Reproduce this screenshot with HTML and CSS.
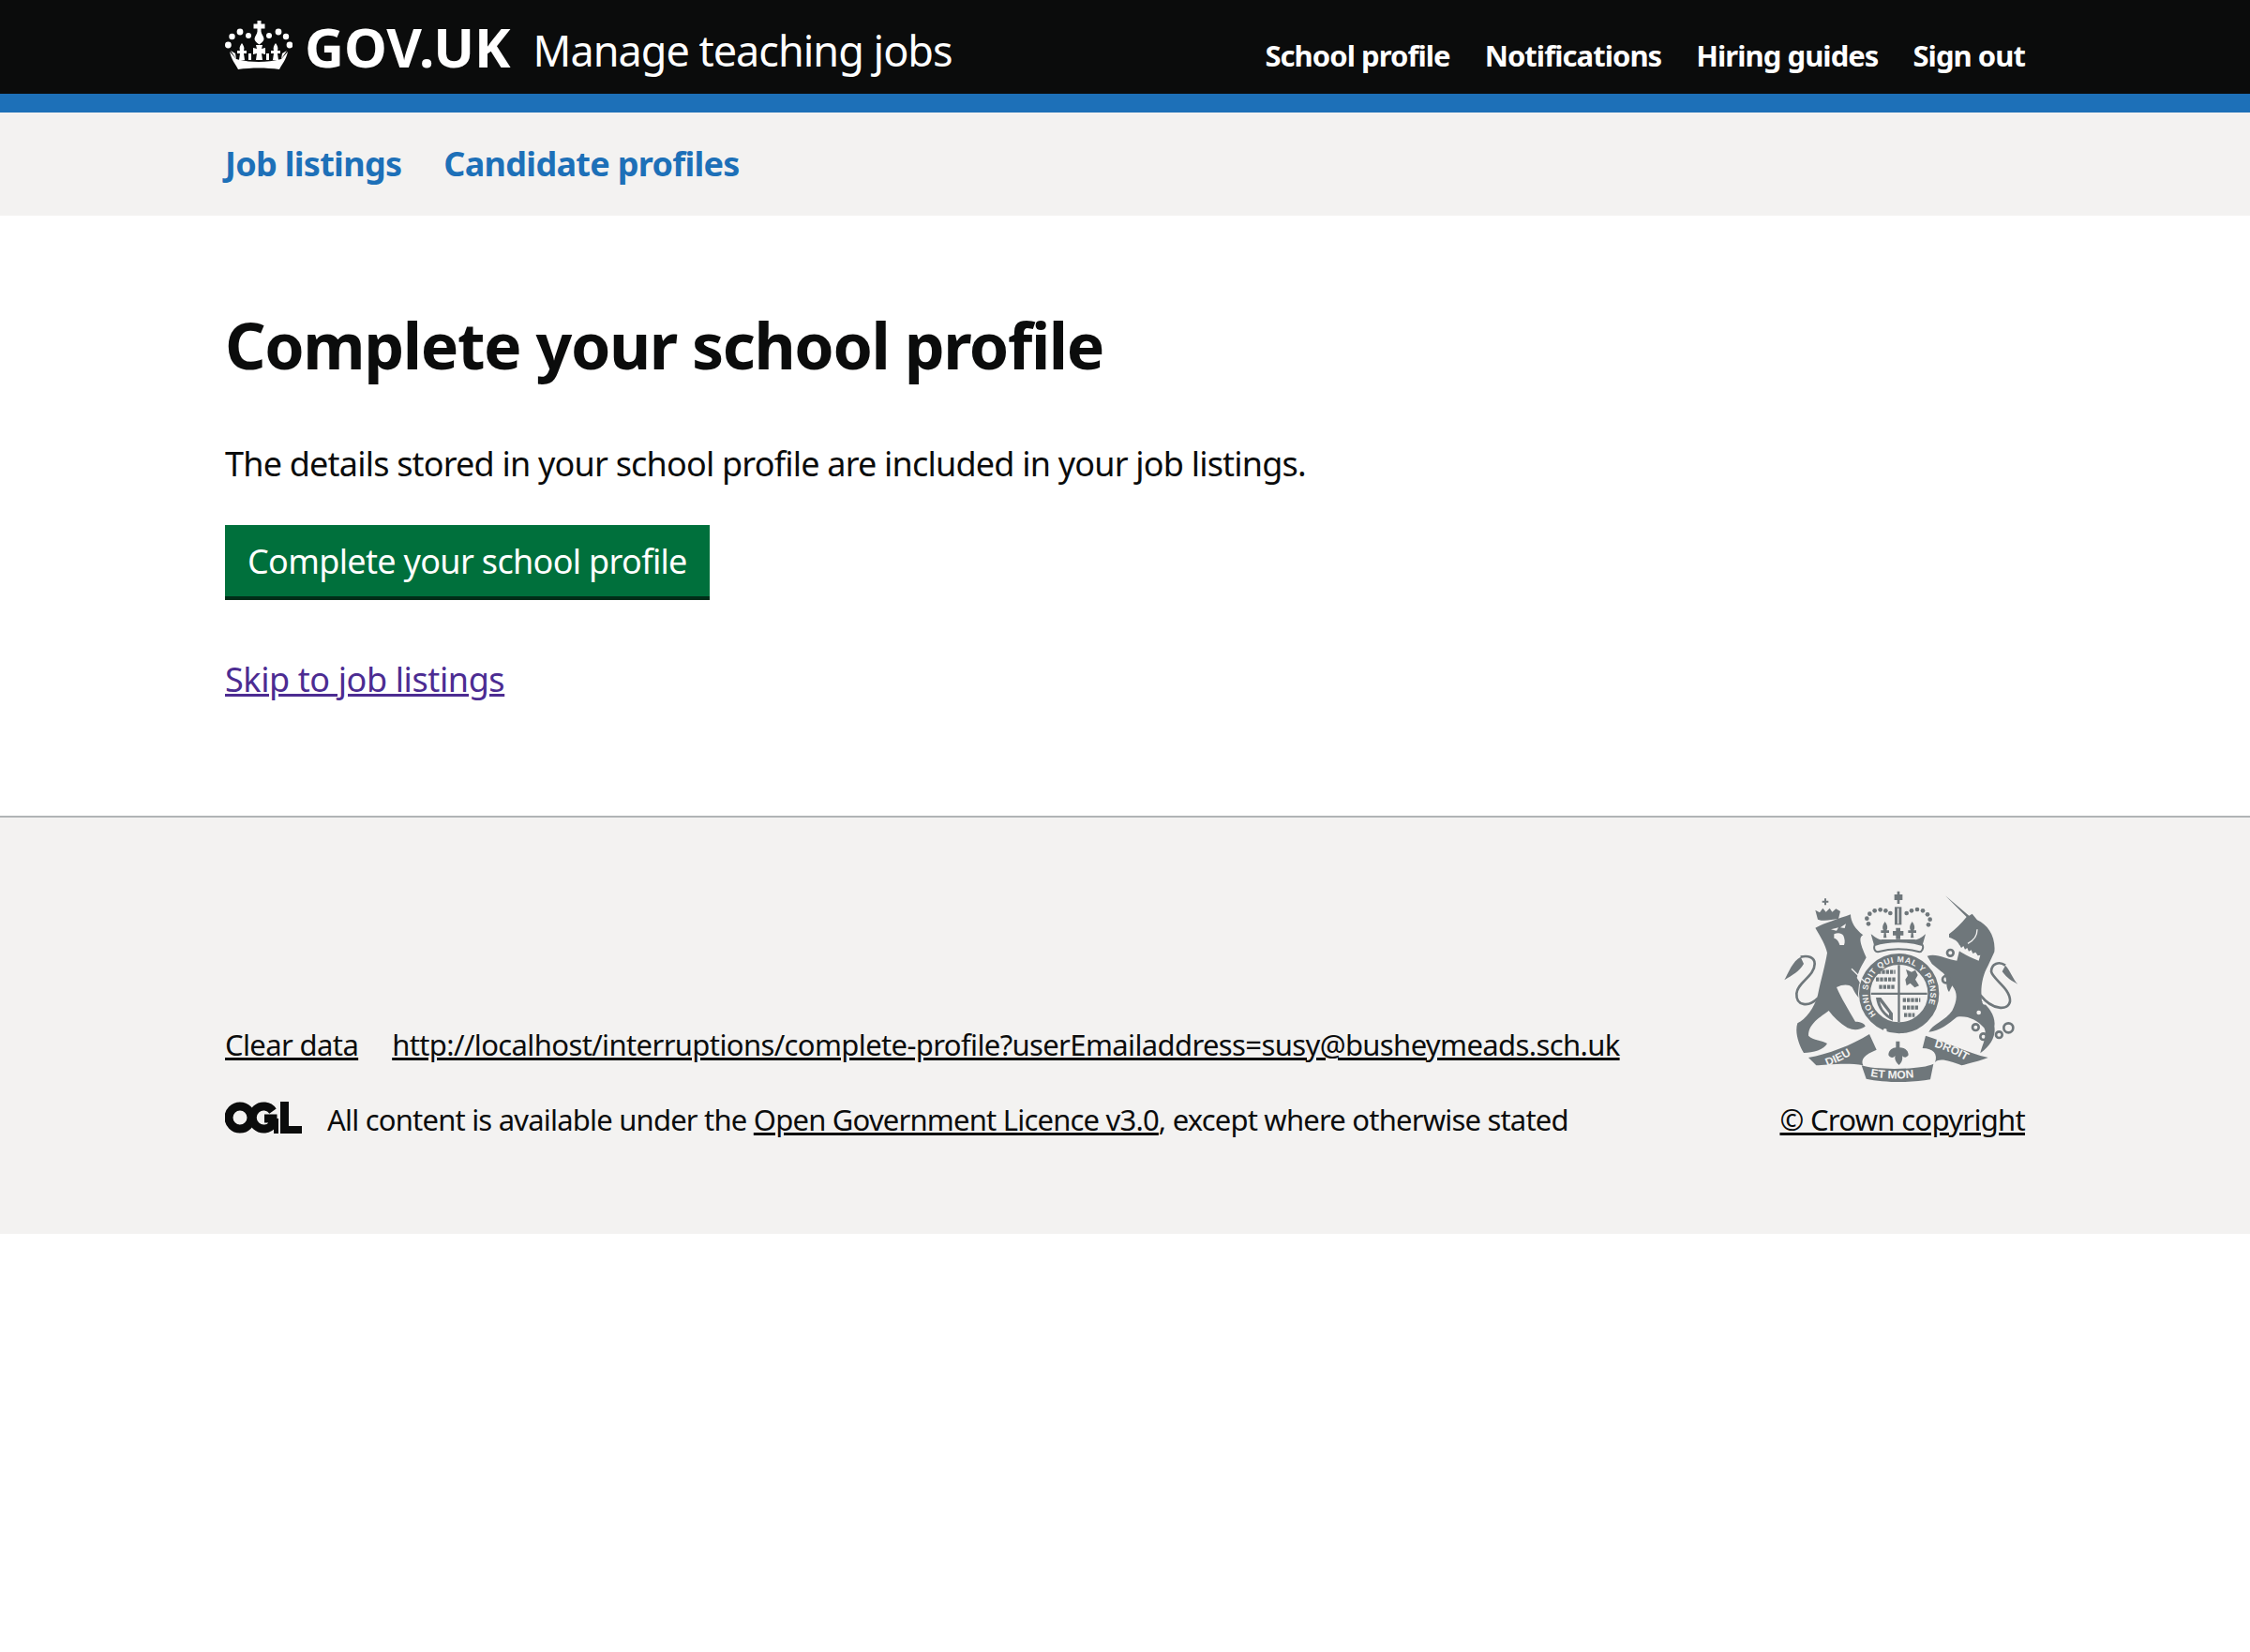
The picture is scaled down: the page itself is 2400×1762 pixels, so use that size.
FILE: index.html
```html
<!DOCTYPE html>
<html lang="en">
<head>
    <meta charset="UTF-8">
    <title>Complete your school profile - Manage teaching jobs</title>
    <link rel="stylesheet" href="styles.css">
</head>
<body>
    <header class="header">
        <div class="container header-row">
            <a class="logo" href="#">
                <svg class="crown" viewBox="0 0 72 52" aria-hidden="true">
                    <g fill="#fff">
                        <path d="M34.5 0h4v3.5h4v5h-4v3c0 3 3 5 3 8 0 2-2 4-5 6-3-2-5-4-5-6 0-3 3-5 3-8v-3h-4v-5h4z"/>
                        <circle cx="16" cy="12" r="3.4"/><circle cx="25" cy="16" r="3"/>
                        <circle cx="47" cy="16" r="3"/><circle cx="57" cy="12" r="3.4"/>
                        <circle cx="7.5" cy="17" r="3.2"/><circle cx="65" cy="17" r="3.2"/>
                        <circle cx="3.4" cy="26" r="3.4"/><circle cx="69" cy="26" r="3.4"/>
                        <path d="M12 41C28 45 44 45 60 41L67 33C65 42 61 46 58 52C44 50 28 50 14 52C11 46 7 42 5 33Z"/>
                        <path d="M18 24c2 3 3 5 2 8h3v3h-3l1 7h-6l1-7h-3v-3h3c-1-3 0-5 2-8z"/>
                        <path d="M54 24c2 3 3 5 2 8h3v3h-3l1 7h-6l1-7h-3v-3h3c-1-3 0-5 2-8z"/>
                        <path d="M33 26h7l-1 4 4-1v7l-4-1 1 7h-7l1-7-4 1v-7l4 1z"/>
                        <path d="M6 32l5 3 1 6zM66 32l-5 3-1 6zM25 35h3v7h-3zM44 35h3v7h-3z"/>
                    </g>
                </svg>
                <span class="logo-text">GOV.UK</span>
            </a>
            <a class="service-name" href="#">Manage teaching jobs</a>
            <nav class="header-nav">
                <a href="#">School profile</a>
                <a href="#">Notifications</a>
                <a href="#">Hiring guides</a>
                <a href="#">Sign out</a>
            </nav>
        </div>
    </header>
    <div class="header-stripe"></div>

    <nav class="sub-nav">
        <div class="container sub-nav-row">
            <a href="#">Job listings</a>
            <a href="#">Candidate profiles</a>
        </div>
    </nav>

    <main class="container main">
        <h1 class="heading">Complete your school profile</h1>
        <p class="body-text">The details stored in your school profile are included in your job listings.</p>
        <a class="button" href="#">Complete your school profile</a>
        <p class="skip"><a href="#">Skip to job listings</a></p>
    </main>

    <footer class="footer">
        <div class="container footer-row">
            <div class="footer-meta">
                <div class="footer-links">
                    <a href="#">Clear data</a>
                    <a href="#">http://localhost/interruptions/complete-profile?userEmailaddress=susy@busheymeads.sch.uk</a>
                </div>
                <div class="licence">
                    <svg class="ogl" viewBox="0 0 82 36" aria-hidden="true">
                        <g fill="none" stroke="#0b0c0c" stroke-width="9">
                            <circle cx="16" cy="18" r="12"/>
                            <path d="M51 11a12 12 0 1 0 0 14v-6h-9"/>
                        </g>
                        <path d="M59 1h9v26h14v8H59zM52 19h5v16h-5z" fill="#0b0c0c"/>
                    </svg>
                    <span>All content is available under the <a href="#">Open Government Licence v3.0</a>, except where otherwise stated</span>
                </div>
            </div>
            <a class="copyright" href="#">
                <svg class="crest" viewBox="60 60 780 630" aria-hidden="true">
                    <defs>
                        <path id="garter-arc" d="M366 462A100 100 0 1 1 514 462"/>
                        <path id="dieu-arc" d="M210 628C255 610 295 590 325 562"/>
                        <path id="droit-arc" d="M552 566C590 575 640 600 678 624"/>
                        <path id="mon-arc" d="M348 660C400 670 470 670 525 656"/>
                    </defs>
                    <g fill="#6f777b">
                        <!-- lion -->
                        <path d="M172 185C200 170 250 155 285 142C285 165 300 190 325 208C310 215 315 235 335 280C325 300 315 310 305 345C320 370 340 395 335 425C310 415 300 395 290 375C280 365 260 365 240 375C255 410 280 450 300 485C315 485 330 490 332 500C315 510 300 515 275 505C250 490 230 470 215 450C190 470 150 490 150 530C165 545 195 545 210 555C200 575 165 585 135 585C120 560 105 520 115 490C140 480 170 440 180 400C190 350 205 300 210 265C205 240 190 215 172 185Z"/>
                        <path d="M180 158l-8-30 14 8 10-14 10 12 12-12 8 12 12-10 14 8-6 24c-22 2-44 10-66 2z"/>
                        <path d="M201 112V104h-7v-6h7v-7h6v7h7v6h-7v8z"/>
                        <path d="M125 278C100 290 85 330 73 352C100 335 120 325 135 300zM780 305C795 320 805 350 820 365C800 355 785 345 770 325z"/>
                        <!-- unicorn -->
                        <path d="M588 82L664 146L674 140L690 160C725 175 750 215 745 262L725 305C705 340 700 380 705 420C730 440 750 470 745 500C750 530 735 560 700 586C705 560 725 530 712 505C690 480 660 465 625 470C600 490 570 515 535 518C545 495 590 480 610 450C625 420 630 395 610 370L600 390C585 370 600 340 575 325L545 300L530 275C560 265 590 285 625 290L632 262C640 240 630 225 600 215L600 205C620 190 640 170 656 150Z"/>
                        <!-- royal crown -->
                        <path d="M425 78h9V68h8v10h9v18h-9v12h-8V96h-9z"/>
                        <path d="M426 118h22v57h-22z"/>
                        <path d="M395 165c8 10 10 20 5 28h8v8h-10l2 16h-10l2-16h-10v-8h8c-5-8-3-18 5-28z"/>
                        <path d="M482 165c8 10 10 20 5 28h8v8h-10l2 16h-10l2-16h-10v-8h8c-5-8-3-18 5-28z"/>
                        <path d="M430 185h14v10h10v14h-10v12h-14v-12h-10v-14h10z"/>
                        <path d="M350 205C365 215 375 225 385 222H490C500 225 512 215 525 205L515 240C470 225 405 225 360 240z"/>
                        <circle cx="342" cy="172" r="7"/><circle cx="337" cy="155" r="7"/><circle cx="346" cy="140" r="7"/><circle cx="362" cy="130" r="7"/><circle cx="380" cy="127" r="7"/><circle cx="397" cy="130" r="7"/><circle cx="412" cy="138" r="7"/>
                        <circle cx="464" cy="138" r="7"/><circle cx="480" cy="130" r="7"/><circle cx="498" cy="126" r="7"/><circle cx="516" cy="130" r="7"/><circle cx="531" cy="142" r="7"/><circle cx="539" cy="158" r="7"/><circle cx="534" cy="175" r="7"/>
                        <!-- ribbon -->
                        <path d="M150 600C210 590 290 560 345 525L368 575C330 590 316 605 325 625C270 615 200 625 175 625Z"/>
                        <path d="M320 625C360 640 510 640 550 620L540 670C480 682 390 680 335 668Z"/>
                        <path d="M525 530C590 550 660 585 725 600C700 610 660 620 640 625C600 610 570 600 555 615C565 590 550 570 515 570Z"/>
                        <!-- fleur -->
                        <path d="M430 548h12v20c14 0 28 8 28 24c-6 10-16 8-20 2c2 10 0 20-10 30c-10-10-16-20-12-30c-6 8-16 8-22-2c0-16 14-24 24-24z"/>
                    </g>
                    <path class="crest-line" d="M437 122v50"/>
                    <path class="crown-band" d="M362 240C405 225 470 225 515 240C520 250 512 262 505 262C460 250 415 250 372 262C362 262 358 250 362 240z"/>
                    <!-- garter and shield -->
                    <circle class="garter-halo" cx="440" cy="395" r="131"/>
                    <circle class="garter-ring" cx="440" cy="395" r="110"/>
                    <g fill="#6f777b">
                        <path d="M436 304h7v182h-7zM350 392h180v7H350z"/>
                        <path fill-rule="evenodd" d="M366 408h16l38 50v24c-30-14-50-40-54-74zM378 420c4 18 14 34 30 46v-8z"/>
                        <path d="M462 318l18 8 12-6 8 16-8 14 12 20-14 6-14-14-12 8-4-20 8-12z"/>
                    </g>
                    <g class="shield-beasts">
                        <path d="M372 326h56M366 350h62M376 374h52"/>
                        <path d="M452 416h56M452 440h50M456 464h34"/>
                    </g>
                    <!-- lion face, unicorn marks -->
                    <g fill="#f3f2f1">
                        <path d="M222 190l24-6-6 10zM270 172l-18 12 14 2zM232 205c10-5 24-5 30 5c4 10 6 20 2 30h-14c-2-10-8-20-18-22z"/>
                        <circle cx="395" cy="513" r="6"/><circle cx="448" cy="528" r="6"/>
                        <circle cx="724" cy="372" r="7"/><circle cx="714" cy="424" r="7"/><circle cx="695" cy="456" r="7"/>
                        <path d="M628 252l6-12 5 9 7-6 5 11 7-5 5 11 8-4 5 11 9-4 7 11 8-2-5 18c-26-9-50-22-72-38z"/>
                    </g>
                    <path class="crest-line" d="M288 316L335 362M690 190C690 210 680 225 660 235"/>
                    <g class="crest-stroke">
                        <path d="M180 410C150 440 110 435 112 395C114 360 170 340 170 300C170 280 150 272 125 278"/>
                        <path d="M700 400C740 450 790 450 795 420C798 380 740 350 735 325C735 300 760 290 780 305"/>
                        <circle cx="790" cy="505" r="15"/><circle cx="760" cy="527" r="10"/><circle cx="710" cy="533" r="10"/><circle cx="685" cy="503" r="10"/>
                        <circle cx="604" cy="265" r="10"/><circle cx="590" cy="350" r="11"/>
                    </g>
                    <text class="crest-text garter-text"><textPath href="#garter-arc">HONI SOIT QUI MAL Y PENSE</textPath></text>
                    <text class="crest-text ribbon-text"><textPath href="#dieu-arc">DIEU</textPath></text>
                    <text class="crest-text ribbon-text"><textPath href="#mon-arc">ET MON</textPath></text>
                    <text class="crest-text ribbon-text"><textPath href="#droit-arc">DROIT</textPath></text>
                </svg>
                <span class="copyright-text">© Crown copyright</span>
            </a>
        </div>
    </footer>
</body>
</html>
```

FILE: styles.css
```css
body {
    margin: 0;
    font-family: "Noto Sans", Arial, sans-serif;
    color: #0b0c0c;
    background-color: #fff;
}
a {
    color: inherit;
}
.container {
    width: 1920px;
    margin: 0 auto;
}
.header {
    height: 100px;
    background-color: #0b0c0c;
    color: #fff;
}
.header-row {
    display: flex;
    align-items: flex-start;
    height: 100%;
}
.header a {
    text-decoration: none;
}
.logo {
    display: flex;
    align-items: flex-start;
    margin-right: 24px;
    padding-top: 22px;
}
.crown {
    width: 72px;
    height: 52px;
    margin-right: 13px;
}
.logo-text {
    font-size: 58px;
    font-weight: 700;
    line-height: 56px;
}
.service-name {
    font-size: 45px;
    line-height: 60px;
    letter-spacing: -1px;
    padding-top: 24px;
}
.header-nav {
    display: flex;
    gap: 37px;
    margin-left: auto;
    padding-top: 37px;
    font-size: 31px;
    font-weight: 700;
    line-height: 44px;
    letter-spacing: -0.95px;
}
.header-stripe {
    height: 20px;
    background-color: #1d70b8;
}
.sub-nav {
    height: 110px;
    background-color: #f3f2f1;
}
.sub-nav-row {
    display: flex;
    gap: 45px;
    padding-top: 30px;
    font-size: 36px;
    font-weight: 700;
    line-height: 50px;
    letter-spacing: -0.7px;
}
.sub-nav a {
    color: #1d70b8;
    text-decoration: none;
}
.main {
    height: 640px;
    padding-top: 98px;
    box-sizing: border-box;
}
.heading {
    margin: 0 0 62px;
    font-size: 68px;
    font-weight: 700;
    line-height: 80px;
    letter-spacing: -1.4px;
}
.body-text {
    margin: 0 0 40px;
    font-size: 36px;
    line-height: 50px;
    letter-spacing: -0.8px;
}
.button {
    display: inline-block;
    padding: 14px 24px 12px;
    font-size: 36px;
    line-height: 50px;
    letter-spacing: -0.67px;
    color: #fff;
    text-decoration: none;
    background-color: #00703c;
    border-bottom: 4px solid #002d18;
}
.skip {
    margin: 60px 0 0;
    font-size: 36px;
    line-height: 50px;
    letter-spacing: -0.4px;
}
.skip a {
    color: #4c2c92;
}
.footer {
    height: 446px;
    box-sizing: border-box;
    background-color: #f3f2f1;
    border-top: 2px solid #b1b4b6;
    font-size: 31px;
    line-height: 40px;
}
.footer-row {
    display: flex;
    justify-content: space-between;
    align-items: flex-end;
    padding-top: 76px;
}
.footer-links {
    display: flex;
    gap: 36px;
    margin-bottom: 40px;
    letter-spacing: -0.62px;
}
.licence {
    display: flex;
    align-items: flex-start;
    gap: 27px;
    letter-spacing: -0.8px;
}
.ogl {
    width: 82px;
    height: 36px;
}
.copyright {
    display: flex;
    flex-direction: column;
    align-items: center;
    gap: 16px;
    letter-spacing: -0.7px;
}
.crest {
    width: 260px;
    height: 210px;
}
.crest-line {
    fill: none;
    stroke: #f3f2f1;
    stroke-width: 4;
}
.crest-stroke {
    fill: none;
    stroke: #6f777b;
    stroke-width: 8;
}
.crown-band {
    fill: #f3f2f1;
    stroke: #6f777b;
    stroke-width: 6;
}
.garter-halo {
    fill: #f3f2f1;
}
.garter-ring {
    fill: #f3f2f1;
    stroke: #6f777b;
    stroke-width: 36;
}
.shield-beasts {
    fill: none;
    stroke: #6f777b;
    stroke-width: 13;
    stroke-dasharray: 10 3;
}
.crest-text {
    fill: #f3f2f1;
    font-family: "Liberation Sans", sans-serif;
    font-weight: 700;
}
.garter-text {
    font-size: 26px;
    letter-spacing: 2.2px;
}
.ribbon-text {
    font-size: 36px;
    letter-spacing: 0;
}
```
